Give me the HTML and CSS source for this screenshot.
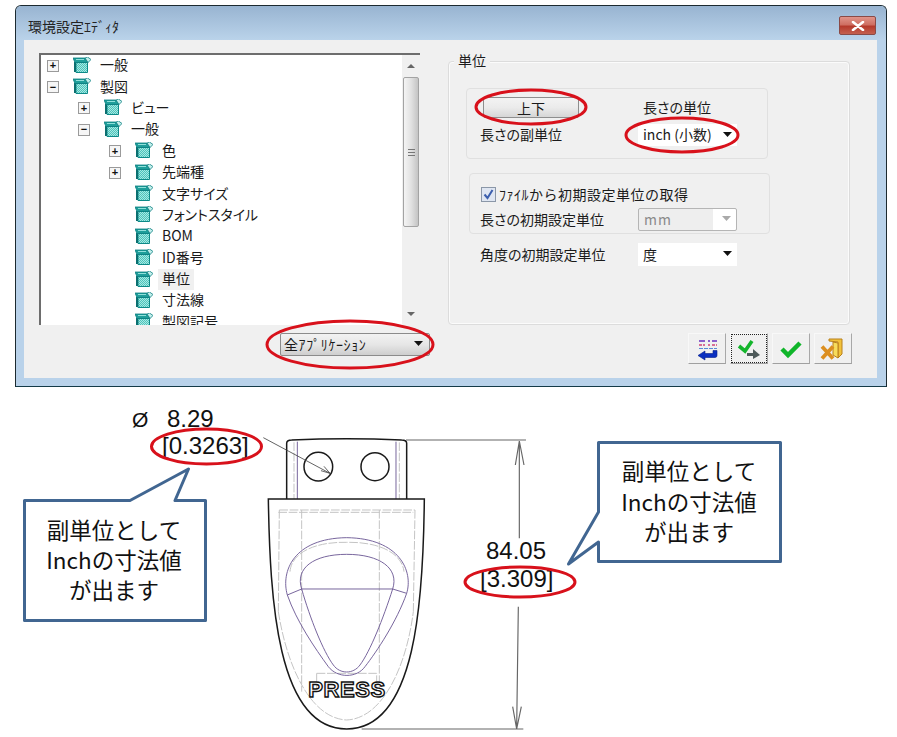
FILE: index.html
```html
<!DOCTYPE html>
<html lang="ja">
<head>
<meta charset="utf-8">
<title>環境設定エディタ</title>
<link rel="stylesheet" href="styles.css">
</head>
<body>
<svg class="defs" width="0" height="0" aria-hidden="true">
  <defs>
    <pattern id="dither" width="2" height="2" patternUnits="userSpaceOnUse">
      <rect width="2" height="2" fill="#a8e8e2"/>
      <rect width="1" height="1" fill="#4cc4bc"/>
      <rect x="1" y="1" width="1" height="1" fill="#4cc4bc"/>
    </pattern>
  </defs>
  <symbol id="box" viewBox="0 0 18 16">
    <path d="M3 5.500h11.500V15.500H3z" fill="url(#dither)" stroke="#0d8a88" stroke-width="1"/>
    <path d="M2 5v10" stroke="#0b6f70" stroke-width="2" fill="none"/>
    <path d="M0 1h12l3 4.500H2z" fill="#1f9e9a" stroke="#0b7f80" stroke-width=".8"/>
    <path d="M12 1l2.500-1 3.500 2.500-3 3z" fill="#c4f0ec" stroke="#0b7f80" stroke-width=".8"/>
    <path d="M3 2.500h8" stroke="#8fe0da" stroke-width="1"/>
  </symbol>
  <symbol id="arrow" viewBox="0 0 9 5"><path d="M0 0h9L4.500 5z"/></symbol>
</svg>

<main class="page">
  <section class="dialog">
    <header class="titlebar">
      <span class="title">環境設定ｴﾃﾞｨﾀ</span>
      <button class="close" type="button" aria-label="閉じる">
        <svg width="14" height="10" viewBox="0 0 14 10"><path d="M2 1l10 8M12 1L2 9" stroke="#fff" stroke-width="2.600" stroke-linecap="round"/></svg>
      </button>
    </header>
    <div class="client">
      <div class="panes">
        <div class="tree">
          <ul class="tree-list">
            <li class="row"><span class="exp">+</span><svg class="box"><use href="#box"/></svg><span class="txt">一般</span></li>
            <li class="row"><span class="exp">−</span><svg class="box"><use href="#box"/></svg><span class="txt">製図</span></li>
            <li class="row d1"><span class="exp">+</span><svg class="box"><use href="#box"/></svg><span class="txt">ビュー</span></li>
            <li class="row d1"><span class="exp">−</span><svg class="box"><use href="#box"/></svg><span class="txt">一般</span></li>
            <li class="row d2"><span class="exp">+</span><svg class="box"><use href="#box"/></svg><span class="txt">色</span></li>
            <li class="row d2"><span class="exp">+</span><svg class="box"><use href="#box"/></svg><span class="txt">先端種</span></li>
            <li class="row d2"><span class="exp blank"></span><svg class="box"><use href="#box"/></svg><span class="txt">文字サイズ</span></li>
            <li class="row d2"><span class="exp blank"></span><svg class="box"><use href="#box"/></svg><span class="txt">フォントスタイル</span></li>
            <li class="row d2"><span class="exp blank"></span><svg class="box"><use href="#box"/></svg><span class="txt">BOM</span></li>
            <li class="row d2"><span class="exp blank"></span><svg class="box"><use href="#box"/></svg><span class="txt">ID番号</span></li>
            <li class="row d2"><span class="exp blank"></span><svg class="box"><use href="#box"/></svg><span class="txt selected">単位</span></li>
            <li class="row d2"><span class="exp blank"></span><svg class="box"><use href="#box"/></svg><span class="txt">寸法線</span></li>
            <li class="row d2"><span class="exp blank"></span><svg class="box"><use href="#box"/></svg><span class="txt">製図記号</span></li>
          </ul>
          <div class="scrollbar">
            <span class="sb-btn"><i class="tri-up"></i></span>
            <span class="thumb"><i class="grip"></i></span>
            <span class="sb-rest"></span>
            <span class="sb-btn"><i class="tri-down"></i></span>
          </div>
        </div>
        <div class="group">
          <div class="legend">単位</div>
          <div class="sub sub-a">
            <button class="push" type="button">上下</button>
            <span class="lbl lbl-right">長さの単位</span>
            <span class="lbl">長さの副単位</span>
            <span class="select"><span>inch (小数)</span><svg class="tri"><use href="#arrow"/></svg></span>
          </div>
          <div class="sub sub-b">
            <label class="check">
              <svg width="15" height="15" viewBox="0 0 15 15"><rect x=".5" y=".5" width="14" height="14" fill="#dfe6f2" stroke="#8b97a8"/><path d="M3.500 7.500l3 3.500 5-8" fill="none" stroke="#3c5fae" stroke-width="2"/></svg>
              <span class="check-text">ﾌｧｲﾙから初期設定単位の取得</span>
            </label>
            <span class="lbl">長さの初期設定単位</span>
            <span class="select disabled"><span>mm</span><svg class="tri"><use href="#arrow"/></svg></span>
          </div>
          <div class="sub sub-c">
            <span class="lbl">角度の初期設定単位</span>
            <span class="select"><span>度</span><svg class="tri"><use href="#arrow"/></svg></span>
          </div>
        </div>
      </div>
      <div class="footer">
        <span class="combo"><span class="combo-text">全ｱﾌﾟﾘｹｰｼｮﾝ</span><svg class="tri"><use href="#arrow"/></svg></span>
        <div class="tools">
          <button class="tool" type="button" aria-label="一覧">
            <svg width="24" height="24" viewBox="0 0 24 24"><path d="M4 4h6M13 4h2M17 4h5" stroke="#6a2fc0" stroke-width="1.600"/><path d="M4 8h6M13 8h2M17 8h5" stroke="#d0447a" stroke-width="1.600" stroke-dasharray="3 1"/><path d="M4 11.500h18" stroke="#5a8ad8" stroke-width="1.200" stroke-dasharray="4 1"/><path d="M22 13.500v5a2 2 0 0 1-2 2H10V23L3 18.500l7-4.500v2.500h8v-3z" fill="#0b2fc0" stroke="#06208a" stroke-width=".6"/></svg>
          </button>
          <button class="tool focused" type="button" aria-label="適用">
            <svg width="26" height="22" viewBox="0 0 26 22"><path d="M3 8l6 5L16 3" fill="none" stroke="#14b52c" stroke-width="3.600"/><path d="M11 15h6v-4l7 6-7 4v-3h-6z" fill="#4d5a5a"/></svg>
          </button>
          <button class="tool" type="button" aria-label="OK">
            <svg width="24" height="20" viewBox="0 0 24 20"><path d="M3 10l6 6L21 4" fill="none" stroke="#10b52a" stroke-width="4.500"/></svg>
          </button>
          <button class="tool" type="button" aria-label="終了">
            <svg width="26" height="24" viewBox="0 0 26 24"><path d="M9 2h13v15l-4 4V5l-9-1z" fill="#f2c23a" stroke="#b8801c"/><path d="M13 5l5 1v15l-5-3z" fill="#f7dc5c" stroke="#b8801c"/><path d="M2 9.500l11 12M13 9.500L2 21.500" stroke="#dc8f20" stroke-width="3.800"/></svg>
          </button>
        </div>
      </div>
    </div>
  </section>

  <svg class="marks" viewBox="0 0 897 387" aria-hidden="true">
    <ellipse cx="531" cy="107" rx="55" ry="17"/>
    <ellipse cx="682" cy="135" rx="56" ry="17"/>
    <ellipse cx="350" cy="344.500" rx="83" ry="23.500"/>
  </svg>

  <svg class="drawing" viewBox="0 387 897 350" role="img" aria-label="寸法図">
    <g class="part" transform="translate(250 425) scale(.33333)">
      <g class="hidden-line">
        <path d="M132 52V222M448 52V222"/>
        <path d="M88 255H495M85 262H490M88 255L85 560M495 255L490 560"/>
        <path d="M155 255V800M388 255V800"/>
        <path d="M85 560C110 720 180 880 290 885C400 880 470 720 490 560"/>
        <path d="M200 745H380V800M200 745V800"/>
        <path d="M120 440C125 380 200 350 290 352C380 350 455 380 462 440"/>
      </g>
      <g class="ring">
        <path d="M112 510C92 440 130 340 290 338C450 340 490 440 470 505C440 590 380 680 345 725C320 760 262 760 235 725C195 670 140 590 112 510Z"/>
        <path d="M155 492C135 430 190 388 290 388C390 388 448 430 428 492C400 580 360 680 330 720C310 748 270 748 250 720C220 680 180 580 155 492Z"/>
        <path d="M112 510L155 492H428L470 505"/>
        <path d="M142 50V222M438 50V222"/>
      </g>
      <path class="solid" d="M110 222V55Q110 45 125 45Q290 38 455 45Q470 45 470 55V222"/>
      <path class="solid" d="M55 222H523C520 520 500 912 290 912C80 912 60 520 55 222Z"/>
      <circle class="solid" cx="205" cy="125" r="43"/>
      <circle class="solid" cx="375" cy="125" r="42"/>
      <path class="thin" d="M40 38L240 145M240 145L222 124M240 145L213 137"/>
      <path class="dim" d="M468 45H828M808 48V340M805 545L800 912M335 912H820M808 48L796 120M808 48L822 120M800 912L788 845M800 912L814 845"/>
    </g>
    <text class="press" x="347" y="697">PRESS</text>

    <text class="num dia" x="132" y="427">Ø</text>
    <text class="num" x="167" y="427">8.29</text>
    <text class="num" x="162" y="454">[0.3263]</text>
    <text class="num" x="486" y="559">84.05</text>
    <text class="num" x="480" y="587">[3.309]</text>

    <ellipse class="mark" cx="206.500" cy="446.500" rx="55" ry="17.500"/>
    <ellipse class="mark" cx="520" cy="582" rx="55" ry="15"/>

    <path class="callout" d="M24.500 500.500H130L188.500 469L175 500.500H205.500V620.500H24.500Z"/>
    <text class="note" x="114" y="539">副単位として</text>
    <text class="note" x="114" y="569">Inchの寸法値</text>
    <text class="note" x="114" y="599">が出ます</text>

    <path class="callout" d="M598.500 442.500H780.500V561.500H598.500V542L568.500 564L598.500 512Z"/>
    <text class="note" x="689" y="480">副単位として</text>
    <text class="note" x="689" y="511">Inchの寸法値</text>
    <text class="note" x="689" y="541">が出ます</text>
  </svg>
</main>
</body>
</html>
```

FILE: styles.css
```css
* { box-sizing: border-box; }

html, body { margin: 0; padding: 0; background: #fff; }

body {
  font-family: "Noto Sans CJK JP", "Liberation Sans", sans-serif;
  font-size: 14px;
  color: #1a1a1a;
}

.defs { position: absolute; }

.page {
  position: relative;
  width: 897px;
  height: 737px;
  overflow: hidden;
}

/* Dialog window */
.dialog {
  width: 872px;
  height: 382px;
  margin: 5px 0 0 15px;
  display: flex;
  flex-direction: column;
  border: 1px solid #1c2a30;
  border-bottom-color: #143a48;
  border-radius: 6px 6px 0 0;
  background: #b9d2ea;
}

.titlebar {
  height: 34px;
  flex: none;
  display: flex;
  align-items: flex-start;
  justify-content: space-between;
  padding: 0 10px 0 12px;
  border-radius: 5px 5px 0 0;
  background: linear-gradient(#98b4d1, #bad3ea);
}

.title { line-height: 40px; color: #222; }

.close {
  width: 37px;
  height: 19px;
  margin-top: 10px;
  padding: 0;
  display: flex;
  align-items: center;
  justify-content: center;
  border: 1px solid #8a4a46;
  border-radius: 2px;
  background: linear-gradient(#e0948a 0%, #cf6f62 45%, #b53a2c 55%, #c4604e 100%);
}

.client {
  margin: 0 9px 8px 8px;
  flex: 1;
  padding: 13px 0 0 15px;
  background: #f0f0f0;
}

.panes { display: flex; gap: 28px; }

/* Tree */
.tree {
  width: 381px;
  height: 272px;
  display: flex;
  background: #fff;
  border-top: 2px solid #6d6d6d;
  border-left: 2px solid #6d6d6d;
}

.tree-list {
  flex: 1;
  margin: 0;
  padding: 0;
  list-style: none;
  overflow: hidden;
  font-feature-settings: "palt";
}

.row {
  height: 21.4px;
  display: flex;
  align-items: center;
  padding-left: 6px;
  white-space: nowrap;
}

.row.d1 { padding-left: 37px; }
.row.d2 { padding-left: 68px; }

.txt { padding-bottom: 3px; line-height: 18px; }

.exp {
  width: 12px;
  height: 12px;
  flex: none;
  display: flex;
  align-items: center;
  justify-content: center;
  border: 1px solid #9a9a9a;
  background: #f6f6f6;
  font: bold 11px/1 "Liberation Sans", sans-serif;
  color: #111;
}

.exp.blank { visibility: hidden; }

.box {
  width: 18px;
  height: 16px;
  flex: none;
  margin: 0 9px 2px 14px;
}

.txt.selected {
  margin-left: -4px;
  padding: 0 4px 3px;
  background: #f0f0f0;
}

.scrollbar {
  width: 18px;
  flex: none;
  display: flex;
  flex-direction: column;
  background: #f0f0f0;
}

.sb-btn {
  height: 22px;
  flex: none;
  display: flex;
  align-items: center;
  justify-content: center;
}

.thumb {
  height: 150px;
  flex: none;
  margin: 0 1px;
  display: flex;
  align-items: center;
  justify-content: center;
  border: 1px solid #a3a3a3;
  border-radius: 2px;
  background: linear-gradient(90deg, #f4f4f4, #e2e2e2 50%, #c4c4c4);
}

.grip {
  width: 7px;
  height: 7px;
  border-top: 1px solid #777;
  border-bottom: 1px solid #777;
  background: linear-gradient(#777, #777) center / 100% 1px no-repeat;
}

.sb-rest { flex: 1; }

.tri-up, .tri-down {
  width: 0;
  height: 0;
  border-left: 4px solid transparent;
  border-right: 4px solid transparent;
}

.tri-up { border-bottom: 4px solid #666; }
.tri-down { border-top: 4px solid #666; }

/* Units group */
.group {
  width: 402px;
  height: 264px;
  margin-top: 8px;
  border: 1px solid #dcdcdc;
  border-radius: 4px;
  box-shadow: inset 0 0 0 1px #fbfbfb;
}

.legend {
  width: fit-content;
  margin: -12px 0 0 5px;
  padding: 0 4px;
  line-height: 20px;
  background: #f0f0f0;
}

.sub {
  display: grid;
  grid-template-columns: 158px 99px;
  align-items: center;
}

.sub-a {
  width: 302px;
  height: 71px;
  margin: 18px 0 0 17px;
  padding: 8px 0 0 13px;
  grid-template-rows: 24px 22px;
  row-gap: 3px;
  border: 1px solid #e0e0e0;
  border-radius: 4px;
}

.sub-b {
  width: 301px;
  height: 61px;
  margin: 14px 0 0 20px;
  padding: 12px 0 0 10px;
  grid-template-rows: 16px 23px;
  row-gap: 6px;
  border: 1px solid #e0e0e0;
  border-radius: 4px;
}

.sub-c {
  margin: 9px 0 0 31px;
  grid-template-rows: 23px;
}

.lbl {
  white-space: nowrap;
  padding-bottom: 2px;
  font-feature-settings: "palt";
}

.lbl-right { padding-left: 5px; align-self: start; line-height: 20px; }

.push {
  width: 96px;
  height: 21px;
  margin: 0 0 0 3px;
  padding: 0 0 2px;
  align-self: start;
  border: 1px solid #8e8e8e;
  border-radius: 2px;
  background: linear-gradient(#f3f3f3, #ebebeb 50%, #d6d6d6);
  font: inherit;
  color: inherit;
}

.check {
  grid-column: 1 / 3;
  display: flex;
  align-items: center;
  gap: 3px;
  margin-left: 1px;
  white-space: nowrap;
}

.check-text { letter-spacing: .5px; }

.select {
  height: 100%;
  display: flex;
  align-items: center;
  justify-content: space-between;
  padding: 0 5px 2px 5px;
  background: #fff;
  white-space: nowrap;
}

.select.disabled {
  border: 1px solid #b5b5b5;
  border-radius: 2px;
  background: linear-gradient(90deg, #eeeeee 76%, #fff 76%);
  color: #8a8a8a;
  letter-spacing: 1px;
}

.tri { width: 9px; height: 5px; flex: none; fill: #111; }
.disabled .tri { fill: #aaa; }

/* Footer row */
.footer {
  display: flex;
  align-items: flex-start;
  margin-top: 8px;
  padding-left: 241px;
}

.combo {
  width: 150px;
  height: 23px;
  display: flex;
  align-items: center;
  justify-content: space-between;
  padding: 0 6px 2px 3px;
  border: 1px solid #8b8b8b;
  border-radius: 2px;
  background: linear-gradient(#f2f2f2, #e6e6e6 50%, #cecece);
  white-space: nowrap;
}

.combo-text { letter-spacing: .6px; }

.tools {
  display: flex;
  gap: 4px;
  margin-left: 258px;
}

.tool {
  width: 38px;
  height: 31px;
  padding: 0;
  display: flex;
  align-items: center;
  justify-content: center;
  border: 1px solid #f8f8f8;
  border-right-color: #a8a8a8;
  border-bottom-color: #a0a0a0;
  background: #f0f0f0;
}

.tool.focused {
  outline: 1px dotted #222;
  outline-offset: -2px;
}

/* Red marks over the dialog */
.marks {
  position: absolute;
  left: 0;
  top: 0;
  width: 897px;
  height: 387px;
  pointer-events: none;
}

.marks ellipse, .mark {
  fill: none;
  stroke: #d8111b;
  stroke-width: 3;
}

/* Drawing */
.drawing {
  display: block;
  width: 897px;
  height: 350px;
}

.part path, .part circle { fill: none; }
.solid { stroke: #1a1a1a; stroke-width: 4.5; }
.thin { stroke: #444; stroke-width: 2.5; }
.dim { stroke: #666; stroke-width: 3.5; }
.ring path { stroke: #6e5a96; stroke-width: 2.8; }
.hidden-line path { stroke: #c4c4c4; stroke-width: 3; stroke-dasharray: 26 5; }

.press {
  font: bold 22px "Liberation Sans", sans-serif;
  letter-spacing: .6px;
  text-anchor: middle;
  fill: #fff;
  stroke: #111;
  stroke-width: 1.4;
}

.num {
  font: 24px "Liberation Sans", sans-serif;
  fill: #111;
}

.dia { font-size: 21px; }

.callout {
  fill: #fff;
  stroke: #416691;
  stroke-width: 3;
  stroke-linejoin: round;
}

.note {
  font-size: 22.5px;
  text-anchor: middle;
  fill: #111;
}
```
